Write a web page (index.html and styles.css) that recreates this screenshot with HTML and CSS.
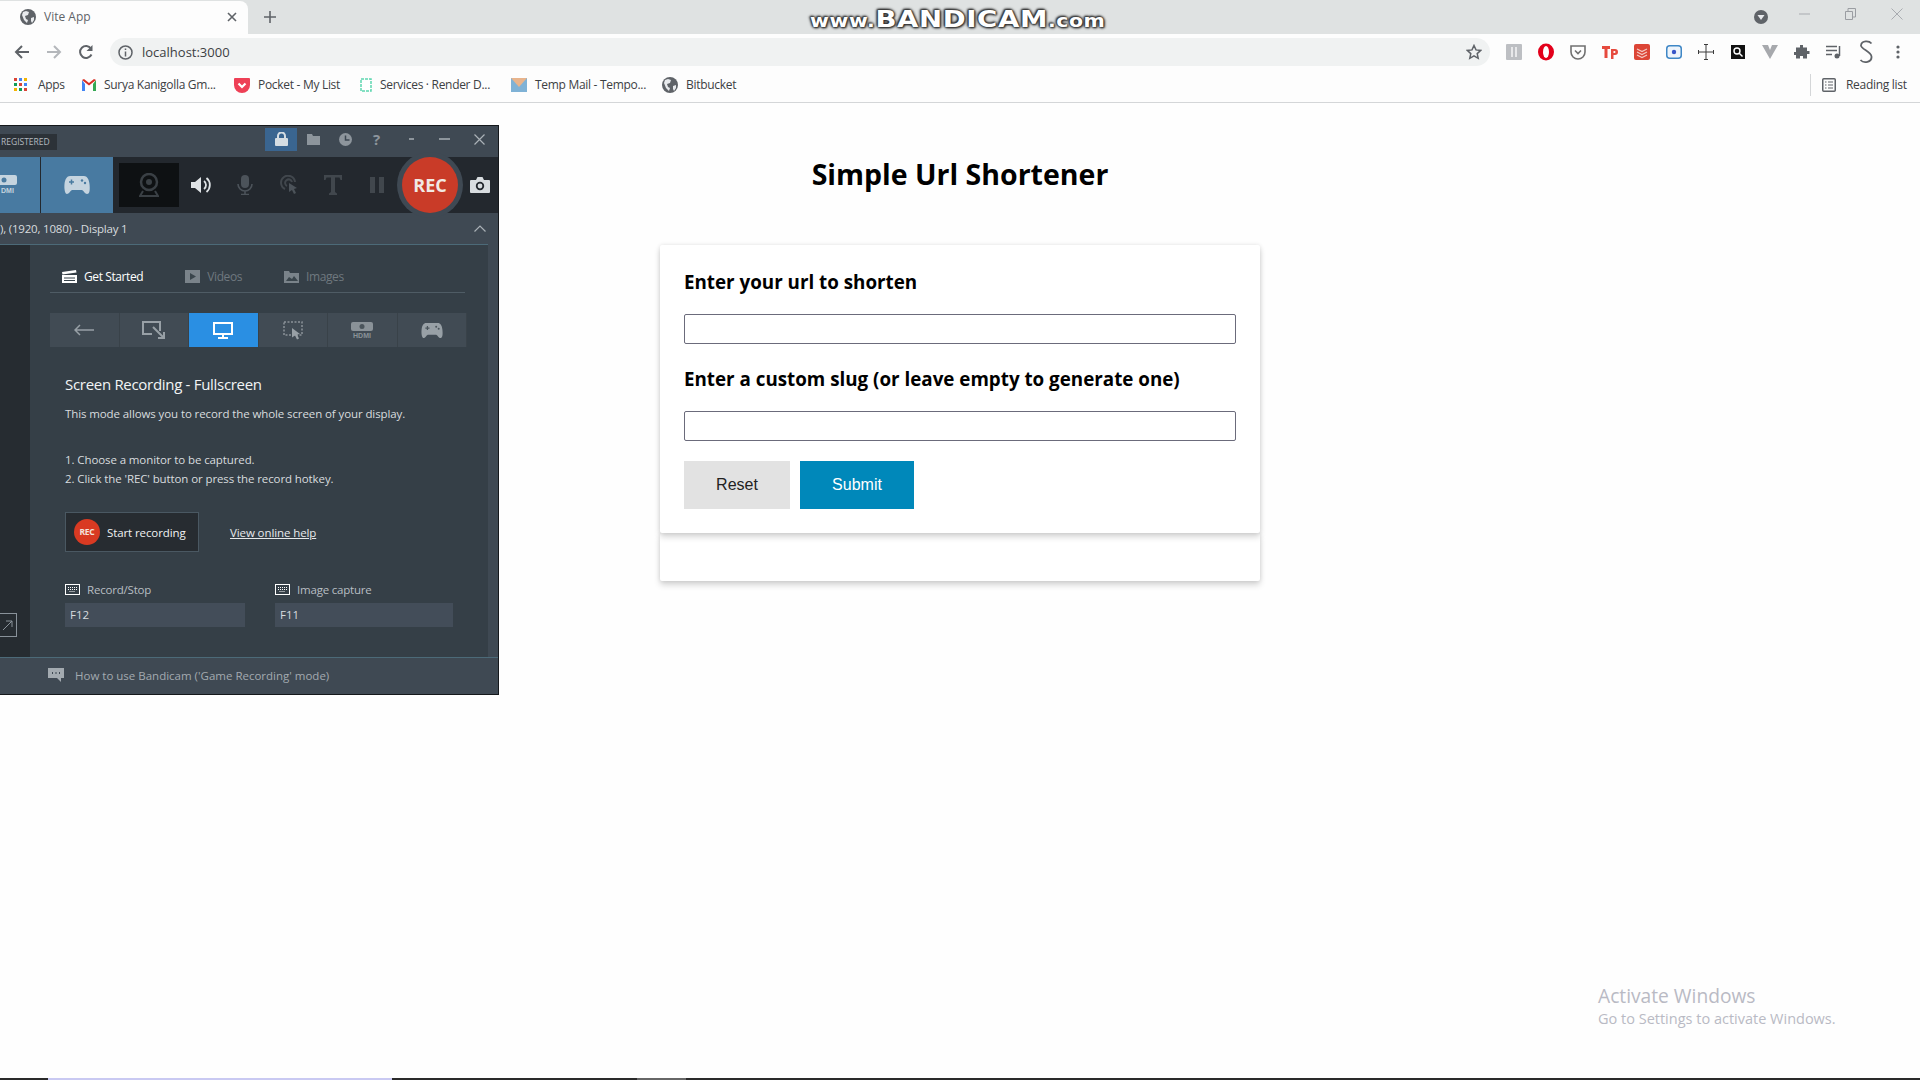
FILE: index.html
```html
<!DOCTYPE html>
<html lang="en">
<head>
    <meta charset="UTF-8">
    <title>Vite App</title>
    <link rel="stylesheet" href="styles.css">
</head>
<body>

    <!-- browser chrome -->
    <div class="tabstrip">
        <div class="tab">
            <svg class="globe" width="16" height="16" viewBox="0 0 16 16"><circle cx="8" cy="8" r="8" fill="#5f6368"/><path d="M3 3l3-1 3 1-1 3-3 1 1 3 2 1-1 3-3-3-2-5zM11 9l3-1 0 3-2 3-1-2z" fill="#e8eaed"/></svg>
            <span class="tab-title">Vite App</span>
            <svg class="tab-close" width="10" height="10" viewBox="0 0 10 10"><path d="M1 1l8 8M9 1l-8 8" stroke="#5f6368" stroke-width="1.6"/></svg>
        </div>
        <svg class="tab-new" width="12" height="12" viewBox="0 0 12 12"><path d="M6 0v12M0 6h12" stroke="#5f6368" stroke-width="1.6"/></svg>
        <div class="winctl">
            <svg class="winctl-down" width="14" height="14" viewBox="0 0 14 14"><circle cx="7" cy="7" r="7" fill="#5f6368"/><path d="M3.5 5h7L7 10z" fill="#e8eaed"/></svg>
            <svg class="winctl-min" width="11" height="2" viewBox="0 0 11 2"><path d="M0 1h11" stroke="#a8abb0"/></svg>
            <svg class="winctl-max" width="11" height="12" viewBox="0 0 11 12"><path d="M.5 3.5h7v8h-7zM3 3V.5h7.5V9H8" fill="none" stroke="#9a9da2"/></svg>
            <svg class="winctl-close" width="12" height="12" viewBox="0 0 12 12"><path d="M.5.5l11 11M11.5.5l-11 11" stroke="#a8abb0"/></svg>
        </div>
    </div>

    <div class="toolbar">
        <svg class="nav-icon" width="16" height="16" viewBox="0 0 16 16"><path d="M15 8H2M8 2L2 8l6 6" fill="none" stroke="#5f6368" stroke-width="2"/></svg>
        <svg class="nav-icon" width="16" height="16" viewBox="0 0 16 16"><path d="M1 8h13M8 2l6 6-6 6" fill="none" stroke="#b4b7bb" stroke-width="2"/></svg>
        <svg class="nav-icon" width="16" height="16" viewBox="0 0 16 16"><path d="M13.5 10.5A6 6 0 1 1 13 4.5" fill="none" stroke="#5f6368" stroke-width="2"/><path d="M14.5 1v6h-6z" fill="#5f6368"/></svg>
        <div class="omnibox">
            <svg width="15" height="15" viewBox="0 0 15 15"><circle cx="7.5" cy="7.5" r="6.5" fill="none" stroke="#5f6368" stroke-width="1.5"/><path d="M7.5 6.5v5M7.5 3.5V5" stroke="#5f6368" stroke-width="1.5"/></svg>
            <span class="omnibox-url">localhost:3000</span>
            <svg class="omnibox-star" width="16" height="16" viewBox="0 0 16 16"><path d="M8 1.5l2 4.400 4.800.5-3.600 3.200 1 4.700L8 11.900l-4.200 2.400 1-4.700L1.200 6.400 6 5.900z" fill="none" stroke="#5f6368" stroke-width="1.5"/></svg>
        </div>
        <div class="extensions">
            <svg width="16" height="16" viewBox="0 0 16 16"><rect width="16" height="16" rx="1" fill="#bdbfc3"/><path d="M6 3v10M10 3v10" stroke="#e8e8ea" stroke-width="2"/></svg>
            <svg width="16" height="18" viewBox="0 0 16 18"><ellipse cx="8" cy="9" rx="8" ry="8.5" fill="#e3001b"/><ellipse cx="8" cy="9" rx="3" ry="6" fill="#fff"/></svg>
            <svg width="16" height="16" viewBox="0 0 16 16"><path d="M1 2h14v6a7 7 0 0 1-14 0z" fill="none" stroke="#707070" stroke-width="1.6"/><path d="M5 6.5l3 3 3-3" fill="none" stroke="#707070" stroke-width="1.6"/></svg>
            <svg width="16" height="16" viewBox="0 0 16 16"><path d="M0 2h8v3H5.500v9h-3V5H0z" fill="#e64a3e"/><path d="M9 5h4a3 3 0 0 1 0 6h-1.500v4H9zM11.500 7v2h1a1 1 0 0 0 0-2z" fill="#e64a3e"/></svg>
            <svg width="16" height="16" viewBox="0 0 16 16"><rect width="16" height="16" rx="2" fill="#dc4536"/><path d="M3 5l5 2.500L13 5M3 8l5 2.500L13 8M3 11l5 2.500L13 11" fill="none" stroke="#f4c9c4" stroke-width="1.2"/></svg>
            <svg width="16" height="14" viewBox="0 0 16 14"><rect x=".75" y=".75" width="14.5" height="12.5" rx="3" fill="#eef4fb" stroke="#3f87c6" stroke-width="1.5"/><circle cx="8" cy="7" r="2.2" fill="#3956c8"/></svg>
            <svg width="16" height="16" viewBox="0 0 16 16"><path d="M8 0v16M0 8h16M6 .5h4M6 15.5h4M.5 6v4M15.5 6v4" fill="none" stroke="#3c3c3c"/></svg>
            <svg width="14" height="14" viewBox="0 0 14 14"><rect width="14" height="14" fill="#111"/><circle cx="6" cy="6" r="3" fill="none" stroke="#fff" stroke-width="1.4"/><path d="M8 8l3.500 3.500" stroke="#fff" stroke-width="1.4"/></svg>
            <svg width="16" height="14" viewBox="0 0 16 14"><path d="M0 0h6l2 5 2-5h6L8 14z" fill="#a7a9ad"/></svg>
            <svg width="16" height="16" viewBox="0 0 16 16"><path d="M6 1h3v2.500h4V7h2.500v3H13v4.500H9V12H6v2.500H2V11H0V8h2V3.500h4z" fill="#5f6368"/></svg>
            <svg width="16" height="14" viewBox="0 0 16 14"><path d="M0 1.500h11M0 5.500h11M0 9.500h6" stroke="#5f6368" stroke-width="1.5"/><path d="M13.500 1v10" stroke="#5f6368" stroke-width="1.5"/><circle cx="11" cy="11" r="2.5" fill="#5f6368"/></svg>
            <svg width="14" height="24" viewBox="0 0 14 24"><path d="M12.500 3.500C10 .5 3 .5 2 5c-1 4 10 6 10.500 11.500C13 22 5 24 1.500 20" fill="none" stroke="#5f6368" stroke-width="1.8"/></svg>
            <svg width="4" height="14" viewBox="0 0 4 14"><circle cx="2" cy="2" r="1.6" fill="#5f6368"/><circle cx="2" cy="7" r="1.6" fill="#5f6368"/><circle cx="2" cy="12" r="1.6" fill="#5f6368"/></svg>
        </div>
    </div>

    <div class="bookmarks">
        <div class="bookmark bookmark-apps">
            <svg width="14" height="14" viewBox="0 0 14 14"><path d="M0 0h3v3H0z" fill="#db4437"/><path d="M5 0h3v3H5z" fill="#4285f4"/><path d="M10 0h3v3h-3z" fill="#f4b400"/><path d="M0 5h3v3H0z" fill="#0f9d58"/><path d="M5 5h3v3H5z" fill="#db4437"/><path d="M10 5h3v3h-3z" fill="#4285f4"/><path d="M0 10h3v3H0z" fill="#f4b400"/><path d="M5 10h3v3H5z" fill="#0f9d58"/><path d="M10 10h3v3h-3z" fill="#db4437"/></svg>
            <span>Apps</span>
        </div>
        <div class="bookmark bookmark-gmail">
            <svg width="14" height="12" viewBox="0 0 14 12"><path d="M0 1v11h3V5z" fill="#4285f4"/><path d="M14 1v11h-3V5z" fill="#34a853"/><path d="M0 1l7 5.500L14 1l-2-1-5 4-5-4z" fill="#d93025"/></svg>
            <span>Surya Kanigolla Gm...</span>
        </div>
        <div class="bookmark bookmark-pocket">
            <svg width="16" height="16" viewBox="0 0 16 16"><path d="M1 1h14a1 1 0 0 1 1 1v6a8 8 0 0 1-16 0V2a1 1 0 0 1 1-1z" fill="#ee4056"/><path d="M4.500 6.500L8 10l3.500-3.500" fill="none" stroke="#fff" stroke-width="2.2"/></svg>
            <span>Pocket - My List</span>
        </div>
        <div class="bookmark bookmark-services">
            <svg width="12" height="14" viewBox="0 0 12 14"><rect x="1" y="1" width="10" height="12" fill="#fff" stroke="#5ed6b0" stroke-width="1.5" stroke-dasharray="3 1"/></svg>
            <span>Services · Render D...</span>
        </div>
        <div class="bookmark bookmark-mail">
            <svg width="16" height="14" viewBox="0 0 16 14"><rect width="16" height="14" fill="#7fb2d6"/><path d="M0 0h16L8 9z" fill="#e8b48c"/></svg>
            <span>Temp Mail - Tempo...</span>
        </div>
        <div class="bookmark bookmark-bit">
            <svg width="16" height="16" viewBox="0 0 16 16"><circle cx="8" cy="8" r="8" fill="#5f6368"/><path d="M3 3l3-1 3 1-1 3-3 1 1 3 2 1-1 3-3-3-2-5zM11 9l3-1 0 3-2 3-1-2z" fill="#e8eaed"/></svg>
            <span>Bitbucket</span>
        </div>
        <div class="reading-list">
            <svg width="14" height="14" viewBox="0 0 14 14"><rect x=".75" y=".75" width="12.5" height="12.5" rx="1" fill="none" stroke="#5f6368" stroke-width="1.5"/><path d="M3 4h1.500M6 4h5M3 7h1.500M6 7h5M3 10h1.500M6 10h5" stroke="#5f6368" stroke-width="1.2"/></svg>
            <span>Reading list</span>
        </div>
    </div>

    <!-- the app -->
    <main class="page">
        <h1 class="page-title">Simple Url Shortener</h1>
        <form class="card card-form">
            <label class="field-label" for="url">Enter your url to shorten</label>
            <input class="field-input" id="url" type="text">
            <label class="field-label field-label-second" for="slug">Enter a custom slug (or leave empty to generate one)</label>
            <input class="field-input" id="slug" type="text">
            <div class="actions">
                <button class="btn btn-reset" type="button">Reset</button>
                <button class="btn btn-submit" type="button">Submit</button>
            </div>
        </form>
        <div class="card card-empty"></div>
    </main>

    <div class="taskbar">
        <div class="taskbar-active"></div>
        <div class="taskbar-hover"></div>
    </div>

    <!-- overlays -->
    <div class="watermark"><small>www.</small>BANDICAM<small>.com</small></div>

    <div class="activate">
        <div class="activate-title">Activate Windows</div>
        <div class="activate-sub">Go to Settings to activate Windows.</div>
    </div>

    <!-- recorder window -->
    <div class="recorder">
        <div class="rec-titlebar">
            <span class="rec-badge">REGISTERED</span>
            <div class="rec-lock">
                <svg width="13" height="14" viewBox="0 0 13 14"><rect y="6" width="13" height="8" rx="1" fill="#d5dde3"/><path d="M3 6V4a3.500 3.500 0 0 1 7 0v2" fill="none" stroke="#d5dde3" stroke-width="2"/></svg>
            </div>
            <svg class="rec-ico-folder" width="13" height="11" viewBox="0 0 13 11"><path d="M0 0h5l1 2h7v9H0z" fill="#8d959c"/></svg>
            <svg class="rec-ico-clock" width="13" height="13" viewBox="0 0 13 13"><circle cx="6.5" cy="6.5" r="6.5" fill="#8d959c"/><path d="M6.500 2.500v4.500h4" fill="none" stroke="#3d4751" stroke-width="1.5"/></svg>
            <span class="rec-ico-help">?</span>
            <svg class="rec-ico-dash" width="5" height="2" viewBox="0 0 5 2"><path d="M0 1h5" stroke="#8d959c" stroke-width="2"/></svg>
            <svg class="rec-ico-min" width="11" height="2" viewBox="0 0 11 2"><path d="M0 1h11" stroke="#8d959c" stroke-width="2"/></svg>
            <svg class="rec-ico-close" width="11" height="11" viewBox="0 0 11 11"><path d="M.5.5l10 10M10.500.5l-10 10" stroke="#aab1b7" stroke-width="1.2"/></svg>
        </div>

        <div class="rec-toolbar">
            <div class="rec-source rec-source-hdmi">
                <svg width="18" height="24" viewBox="0 0 18 24"><rect x="-5" y="2" width="22" height="10" rx="2" fill="#c5d4df"/><circle cx="4" cy="7" r="2.5" fill="#4a7ba0"/><text x="1" y="20" class="hdmi-label" fill="#c5d4df">DMI</text></svg>
            </div>
            <div class="rec-source rec-source-game">
                <svg width="26" height="18" viewBox="0 0 26 18"><path d="M6 0h14c3 0 5 3 5.500 8S26 18 23 18c-2 0-3-3-5-4H8c-2 1-3 4-5 4S0 13 .5 8 3 0 6 0z" fill="#c5d4df"/><path d="M5 6h5M7.500 3.500v5" stroke="#4a7ba0" stroke-width="1.5"/><circle cx="18" cy="4.500" r="1.2" fill="#4a7ba0"/><circle cx="21" cy="7" r="1.2" fill="#4a7ba0"/></svg>
            </div>
            <div class="rec-webcam">
                <svg width="20" height="24" viewBox="0 0 20 24"><circle cx="10" cy="9" r="8" fill="none" stroke="#3a4045" stroke-width="2.5"/><circle cx="10" cy="9" r="3" fill="#3a4045"/><path d="M4 18l-3 5h18l-3-5" fill="none" stroke="#3a4045" stroke-width="2"/></svg>
            </div>
            <div class="rec-tool">
                <svg width="20" height="18" viewBox="0 0 20 18"><path d="M0 6h4l6-5v16l-6-5H0z" fill="#dfe3e6"/><path d="M13 5a5 5 0 0 1 0 8M15.500 2a9 9 0 0 1 0 14" fill="none" stroke="#dfe3e6" stroke-width="1.8"/></svg>
            </div>
            <div class="rec-tool">
                <svg width="16" height="20" viewBox="0 0 16 20"><rect x="4" width="8" height="13" rx="4" fill="#4c535a"/><path d="M1 9a7 7 0 0 0 14 0M8 16v3M4 19.500h8" fill="none" stroke="#4c535a" stroke-width="1.6"/></svg>
            </div>
            <div class="rec-tool">
                <svg width="18" height="20" viewBox="0 0 18 20"><path d="M5 14A7 7 0 1 1 15 7M7 11a3.500 3.500 0 1 1 5-4" fill="none" stroke="#41474d" stroke-width="2"/><path d="M9 8l8 5-3 1 2 4-2 1-2-4-3 2z" fill="#4c535a"/></svg>
            </div>
            <div class="rec-tool">
                <svg width="18" height="20" viewBox="0 0 18 20"><path d="M0 0h18v5h-1.500l-1-2.500H11V17l2 1.500V20H5v-1.500L7 17V2.500H2.500L1.500 5H0z" fill="#41474d"/></svg>
            </div>
            <div class="rec-tool">
                <svg width="14" height="16" viewBox="0 0 14 16"><path d="M0 0h5v16H0zM9 0h5v16H9z" fill="#41474d"/></svg>
            </div>
            <div class="rec-button">REC</div>
            <div class="rec-camera">
                <svg width="20" height="16" viewBox="0 0 20 16"><path d="M1 3h5l1.500-3h5L14 3h5a1 1 0 0 1 1 1v11a1 1 0 0 1-1 1H1a1 1 0 0 1-1-1V4a1 1 0 0 1 1-1z" fill="#d8dde0"/><circle cx="10" cy="9" r="4.2" fill="#23282e"/><circle cx="10" cy="9" r="2.4" fill="#d8dde0"/></svg>
            </div>
        </div>

        <div class="rec-display">
            <span>), (1920, 1080) - Display 1</span>
            <svg width="12" height="7" viewBox="0 0 12 7"><path d="M.5 6.500L6 1l5.500 5.500" fill="none" stroke="#aab1b7" stroke-width="1.2"/></svg>
        </div>

        <div class="rec-body">
            <div class="rec-side">
                <div class="rec-side-box">
                    <svg width="12" height="12" viewBox="0 0 12 12"><path d="M1 11L10 2M4 2h6v6" fill="none" stroke="#89929a"/></svg>
                </div>
            </div>
            <div class="rec-panel">
                <div class="rec-tabs">
                    <div class="rec-tab rec-tab-on">
                        <svg width="15" height="13" viewBox="0 0 15 13"><path d="M0 5h15v8H0z" fill="#fff"/><path d="M0 2l14-2 .5 2.500L.5 4.500z" fill="#fff"/><path d="M2 8h11M2 10.500h11" stroke="#36424a"/></svg>
                        <span>Get Started</span>
                    </div>
                    <div class="rec-tab">
                        <svg width="15" height="13" viewBox="0 0 15 13"><rect width="15" height="13" fill="#7a838a"/><path d="M5 3l6 3.500L5 10z" fill="#3a454c"/></svg>
                        <span>Videos</span>
                    </div>
                    <div class="rec-tab">
                        <svg width="15" height="13" viewBox="0 0 15 13"><path d="M0 1h5l1 2h9v10H0z" fill="#7a838a"/><path d="M2 11l3-4 3 2 2-3 4 5z" fill="#3a454c"/></svg>
                        <span>Images</span>
                    </div>
                </div>

                <div class="rec-modes">
                    <div class="rec-mode">
                        <svg width="20" height="12" viewBox="0 0 20 12"><path d="M20 6H1M6 1L1 6l5 5" fill="none" stroke="#98a0a6" stroke-width="1.5"/></svg>
                    </div>
                    <div class="rec-mode">
                        <svg width="24" height="18" viewBox="0 0 24 18"><path d="M18 10V1H1v12h9" fill="none" stroke="#98a0a6" stroke-width="2"/><path d="M11 6l11 11M16 17h6v-6" fill="none" stroke="#98a0a6" stroke-width="2"/></svg>
                    </div>
                    <div class="rec-mode rec-mode-on">
                        <svg width="20" height="17" viewBox="0 0 20 17"><rect x="1" y="1" width="18" height="11" fill="none" stroke="#fff" stroke-width="2"/><path d="M10 12v3M5 16h10" stroke="#fff" stroke-width="2"/></svg>
                    </div>
                    <div class="rec-mode">
                        <svg width="20" height="19" viewBox="0 0 20 19"><rect x="1" y="1" width="18" height="13" fill="none" stroke="#8a9298" stroke-width="1.5" stroke-dasharray="2 1.5"/><path d="M9 7l8 6-3 .5 2 4-2 1-2-4-3 2z" fill="#98a0a6"/></svg>
                    </div>
                    <div class="rec-mode">
                        <svg width="22" height="16" viewBox="0 0 22 16"><rect width="22" height="9" rx="2" fill="#8a9298"/><circle cx="11" cy="4.5" r="2.5" fill="#4a545b"/><text x="11" y="15.500" text-anchor="middle" class="hdmi-label" fill="#8a9298">HDMI</text></svg>
                    </div>
                    <div class="rec-mode">
                        <svg width="22" height="15" viewBox="0 0 26 18"><path d="M6 0h14c3 0 5 3 5.500 8S26 18 23 18c-2 0-3-3-5-4H8c-2 1-3 4-5 4S0 13 .5 8 3 0 6 0z" fill="#98a0a6"/><path d="M5 6h5M7.500 3.500v5" stroke="#4a545b" stroke-width="1.5"/><circle cx="18" cy="4.500" r="1.2" fill="#4a545b"/><circle cx="21" cy="7" r="1.2" fill="#4a545b"/></svg>
                    </div>
                </div>

                <h2 class="rec-heading">Screen Recording - Fullscreen</h2>
                <p class="rec-text rec-desc">This mode allows you to record the whole screen of your display.</p>
                <p class="rec-text">1. Choose a monitor to be captured.</p>
                <p class="rec-text">2. Click the 'REC' button or press the record hotkey.</p>

                <div class="rec-start-row">
                    <div class="rec-start">
                        <span class="rec-start-dot">REC</span>
                        <span>Start recording</span>
                    </div>
                    <a class="rec-help-link">View online help</a>
                </div>

                <div class="rec-hotkeys">
                    <div class="rec-hotkey">
                        <div class="rec-hotkey-label">
                            <svg width="15" height="11" viewBox="0 0 15 11"><rect x=".5" y=".5" width="14" height="10" fill="none" stroke="#fff"/><path d="M3 3.500h9M3 5.500h9M4.500 7.500h6" stroke="#fff" stroke-dasharray="1 1"/></svg>
                            <span>Record/Stop</span>
                        </div>
                        <div class="rec-hotkey-box">F12</div>
                    </div>
                    <div class="rec-hotkey rec-hotkey-second">
                        <div class="rec-hotkey-label">
                            <svg width="15" height="11" viewBox="0 0 15 11"><rect x=".5" y=".5" width="14" height="10" fill="none" stroke="#fff"/><path d="M3 3.500h9M3 5.500h9M4.500 7.500h6" stroke="#fff" stroke-dasharray="1 1"/></svg>
                            <span>Image capture</span>
                        </div>
                        <div class="rec-hotkey-box">F11</div>
                    </div>
                </div>
            </div>
        </div>

        <div class="rec-footer">
            <svg width="16" height="14" viewBox="0 0 16 14"><path d="M0 0h16v10h-3v4l-4-4H0z" fill="#a3aab0"/><path d="M4 5h1M7.500 5h1M11 5h1" stroke="#3d4751" stroke-width="2"/></svg>
            <span>How to use Bandicam ('Game Recording' mode)</span>
        </div>
    </div>

</body>
</html>
```

FILE: styles.css
```css
* {
    box-sizing: border-box;
}
html, body {
    height: 100%;
}
body {
    margin: 0;
    height: 1080px;
    overflow: hidden;
    display: flex;
    flex-direction: column;
    background-color: #fefefe;
    font-family: "Open Sans", "Noto Sans", sans-serif;
    color: #000;
}

/* browser chrome */
.tabstrip {
    height: 34px;
    display: flex;
    align-items: flex-end;
    background-color: #dfe2e2;
    flex: none;
}
.tab {
    width: 248px;
    height: 33px;
    display: flex;
    align-items: center;
    padding: 0 11px 2px 20px;
    background-color: #fdfdfd;
    border-radius: 0 8px 0 0;
}
.tab-title {
    margin-left: 8px;
    font-size: 12px;
    color: #5f6368;
    flex: 1;
}
.tab-new {
    margin: 0 0 11px 16px;
}
.winctl {
    margin-left: auto;
    height: 34px;
    display: flex;
    align-items: center;
    padding-right: 17px;
}
.winctl-min {
    margin: -6px 0 0 31px;
}
.winctl-max {
    margin: -6px 0 0 35px;
}
.winctl-close {
    margin: -6px 0 0 35px;
}

.toolbar {
    height: 36px;
    flex: none;
    display: flex;
    align-items: center;
    background-color: #fdfdfd;
    padding-left: 14px;
}
.nav-icon {
    margin-right: 16px;
}
.omnibox {
    width: 1380px;
    height: 28px;
    padding: 0 8px;
    flex: none;
    display: flex;
    align-items: center;
    background-color: #f0f2f2;
    border-radius: 14px;
}
.omnibox-url {
    margin-left: 9px;
    font-size: 13px;
    color: #3c4043;
}
.omnibox-star {
    margin-left: auto;
}
.extensions {
    margin-left: 8px;
    display: grid;
    grid-template-columns: repeat(13, 32px);
    justify-items: center;
    align-items: center;
}

.bookmarks {
    height: 33px;
    flex: none;
    display: flex;
    align-items: center;
    background-color: #fdfdfd;
    border-bottom: 1px solid #d4d6d8;
    padding: 0 0 3px 14px;
    font-size: 12px;
    color: #3c4043;
}
.bookmark {
    display: flex;
    align-items: center;
    gap: 8px;
}
.bookmark span {
    white-space: nowrap;
    letter-spacing: -0.3px;
}
.bookmark-apps {
    width: 68px;
    gap: 10px;
}
.bookmark-gmail {
    width: 152px;
}
.bookmark-pocket {
    width: 126px;
}
.bookmark-services {
    width: 151px;
}
.bookmark-mail {
    width: 151px;
}
.reading-list {
    margin-left: auto;
    height: 22px;
    width: 110px;
    padding-left: 11px;
    display: flex;
    align-items: center;
    gap: 10px;
    border-left: 1px solid #d4d6d8;
    letter-spacing: -0.3px;
    white-space: nowrap;
}

/* the app */
.page {
    flex: 1;
    width: 600px;
    margin: 0 auto;
}
.page-title {
    margin: 51px 0 51px;
    font-size: 28.5px;
    line-height: 40px;
    font-weight: 700;
    text-align: center;
}
.card {
    display: block;
    padding: 24px;
    background-color: #fff;
    box-shadow: 0 4px 6px rgba(0, 0, 0, 0.16), 0 0 4px rgba(0, 0, 0, 0.1);
    border-radius: 2px;
}
.card-form {
    position: relative;
    z-index: 1;
}
.card-empty {
    height: 48px;
}
.field-label {
    display: block;
    font-size: 18.8px;
    line-height: 27px;
    font-weight: 700;
    margin-bottom: 18px;
}
.field-label-second {
    margin-top: 22px;
}
.field-input {
    display: block;
    width: 100%;
    height: 30px;
    border: 1px solid #6b6b7b;
    border-radius: 2px;
    background-color: #fff;
}
.actions {
    margin-top: 20px;
    display: flex;
    gap: 10px;
}
.btn {
    height: 48px;
    border: none;
    font-family: "Liberation Sans", Arial, sans-serif;
    font-size: 16px;
}
.btn-reset {
    width: 106px;
    background-color: #e2e2e2;
    color: #222;
}
.btn-submit {
    width: 114px;
    background-color: #0088ba;
    color: #fff;
}

.taskbar {
    height: 2px;
    flex: none;
    background-color: #2a2a2a;
    display: flex;
}
.taskbar-active {
    width: 344px;
    margin-left: 48px;
    background-color: #c9c9f2;
}
.taskbar-hover {
    width: 49px;
    margin-left: 245px;
    background-color: #666;
}

/* overlays */
.watermark {
    position: absolute;
    left: 810px;
    top: 4px;
    font-family: "DejaVu Sans", sans-serif;
    font-weight: 700;
    font-size: 23px;
    line-height: 30px;
    letter-spacing: 0.5px;
    white-space: nowrap;
    color: #fff;
    transform: scaleX(1.2);
    transform-origin: left center;
    text-shadow: 0 0 2px #333, 0 0 2px #333, 0 0 3px #333, 1px 1px 2px #333, -1px -1px 2px #333;
}
.watermark small {
    font-size: 17px;
}
.activate {
    position: absolute;
    left: 1598px;
    top: 983px;
    color: #b9bac4;
}
.activate-title {
    font-size: 19.2px;
    line-height: 26px;
}
.activate-sub {
    font-size: 14.5px;
    line-height: 20px;
}

/* recorder window */
.recorder {
    position: absolute;
    left: 0;
    top: 125px;
    width: 499px;
    height: 570px;
    display: flex;
    flex-direction: column;
    background-color: #3f4953;
    border: 1px solid #15181b;
    border-left: none;
    font-family: "Open Sans", "Noto Sans", sans-serif;
    font-size: 12px;
    color: #cfd4d8;
}
.rec-titlebar {
    height: 31px;
    flex: none;
    display: flex;
    align-items: center;
    padding-bottom: 5px;
}
.rec-badge {
    width: 57px;
    height: 16px;
    margin-top: 6px;
    background-color: #2c3238;
    font-size: 8.5px;
    line-height: 16px;
    color: #b4bac0;
    white-space: nowrap;
    overflow: hidden;
    padding-left: 1px;
}
.rec-lock {
    width: 32px;
    height: 23px;
    margin-left: 208px;
    display: flex;
    align-items: center;
    justify-content: center;
    background-color: #3a6590;
}
.rec-ico-folder {
    margin-left: 10px;
}
.rec-ico-clock {
    margin-left: 19px;
}
.rec-ico-help {
    margin-left: 21px;
    font-size: 15px;
    font-weight: 700;
    line-height: 15px;
    color: #8d959c;
}
.rec-ico-dash {
    margin-left: 29px;
}
.rec-ico-min {
    margin-left: 25px;
}
.rec-ico-close {
    margin-left: 24px;
}
.rec-toolbar {
    height: 56px;
    flex: none;
    display: flex;
    align-items: center;
    background-color: #23282e;
}
.rec-source {
    height: 56px;
    display: flex;
    align-items: center;
    background-color: #487aa1;
}
.rec-source-hdmi {
    width: 40px;
    justify-content: flex-start;
}
.rec-source-game {
    width: 72px;
    margin-left: 1px;
    justify-content: center;
}
.hdmi-label {
    font-family: "Liberation Sans", sans-serif;
    font-size: 7px;
    font-weight: 700;
}
.rec-webcam {
    width: 60px;
    height: 44px;
    margin-left: 6px;
    display: flex;
    align-items: center;
    justify-content: center;
    background-color: #0e1113;
}
.rec-tool {
    width: 44px;
    display: flex;
    justify-content: center;
}
.rec-button {
    width: 56px;
    height: 56px;
    margin-left: 3px;
    border-radius: 50%;
    box-shadow: 0 0 0 5px #3f4953;
    display: flex;
    align-items: center;
    justify-content: center;
    background-color: #c93b28;
    color: #f1e9e4;
    font-size: 18px;
    font-weight: 700;
}
.rec-camera {
    flex: 1;
    padding-left: 3px;
    display: flex;
    justify-content: center;
}
.rec-display {
    height: 31px;
    flex: none;
    display: flex;
    align-items: center;
    justify-content: space-between;
    padding-right: 12px;
    font-size: 11.5px;
    letter-spacing: -0.2px;
    color: #d8dcdf;
}
.rec-body {
    flex: 1;
    display: flex;
    margin-right: 10px;
    border-top: 1px solid #4c6a78;
}
.rec-side {
    width: 30px;
    background-color: #262c31;
    position: relative;
}
.rec-side-box {
    position: absolute;
    left: -1px;
    top: 368px;
    width: 18px;
    height: 24px;
    border: 1px solid #89929a;
    display: flex;
    align-items: center;
    justify-content: center;
}
.rec-panel {
    flex: 1;
    padding: 0 20px;
    background-color: #353f47;
    display: flex;
    flex-direction: column;
}
.rec-tabs {
    height: 48px;
    flex: none;
    width: 415px;
    display: flex;
    align-items: flex-end;
    padding: 0 0 8px 12px;
    border-bottom: 1px solid #4f5c65;
    color: #6f787f;
}
.rec-tab {
    height: 16px;
    display: flex;
    align-items: center;
    gap: 7px;
    margin-right: 42px;
    letter-spacing: -0.4px;
}
.rec-tab-on {
    color: #fff;
}
.rec-modes {
    width: 417px;
    height: 34px;
    margin-top: 20px;
    flex: none;
    display: grid;
    grid-template-columns: repeat(6, 1fr);
    background-color: #414b54;
}
.rec-mode {
    display: flex;
    align-items: center;
    justify-content: center;
    border-right: 1px solid #394249;
}
.rec-mode-on {
    background-color: #2a8fe3;
}
.rec-heading {
    margin: 27px 0 0 15px;
    font-size: 15px;
    line-height: 20px;
    font-weight: 400;
    color: #f2f4f5;
    letter-spacing: -0.3px;
}
.rec-text {
    margin: 0 0 0 15px;
    font-size: 11.5px;
    line-height: 19px;
    color: #d8dcdf;
    letter-spacing: -0.1px;
}
.rec-desc {
    margin-top: 10px;
    margin-bottom: 27px;
}
.rec-start-row {
    margin: 24px 0 0 15px;
    display: flex;
    align-items: center;
}
.rec-start {
    width: 134px;
    height: 40px;
    display: flex;
    align-items: center;
    gap: 7px;
    padding-left: 8px;
    background-color: #272c31;
    border: 1px solid #4a5862;
    color: #f0f2f3;
    font-size: 11.5px;
    letter-spacing: -0.1px;
}
.rec-start-dot {
    width: 26px;
    height: 26px;
    border-radius: 50%;
    background-color: #d93a22;
    color: #f3e3dc;
    font-size: 8.5px;
    font-weight: 700;
    line-height: 26px;
    text-align: center;
    letter-spacing: -0.3px;
}
.rec-help-link {
    margin-left: 31px;
    font-size: 11.5px;
    letter-spacing: -0.1px;
    text-decoration: underline;
    color: #e6e9eb;
}
.rec-hotkeys {
    display: flex;
    margin: 28px 0 0 15px;
    gap: 30px;
}
.rec-hotkey {
    width: 180px;
}
.rec-hotkey-second {
    width: 178px;
}
.rec-hotkey-label {
    height: 19px;
    display: flex;
    align-items: center;
    gap: 7px;
    font-size: 11.5px;
    letter-spacing: -0.2px;
    color: #b8bec3;
}
.rec-hotkey-box {
    height: 24px;
    margin-top: 4px;
    padding-left: 5px;
    background-color: #434d59;
    font-size: 11.5px;
    line-height: 24px;
    color: #d8dcdf;
}
.rec-footer {
    height: 37px;
    flex: none;
    display: flex;
    align-items: center;
    gap: 11px;
    padding: 0 0 2px 48px;
    border-top: 1px solid #4c6a78;
    font-size: 11.5px;
    color: #a3aab0;
}
```
